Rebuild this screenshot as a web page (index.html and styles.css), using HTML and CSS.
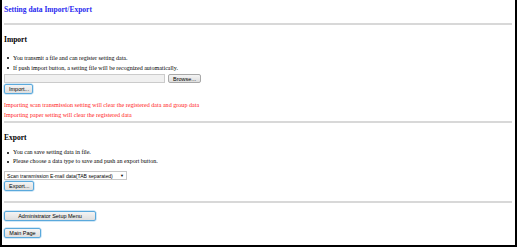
FILE: index.html
```html
<!DOCTYPE html>
<html lang="en">
<head>
    <meta charset="UTF-8">
    <title>Setting data Import/Export</title>
    <link rel="stylesheet" href="styles.css">
</head>
<body>

<div class="frame">
    <h1 class="page-title">Setting data Import/Export</h1>
    <hr class="rule">

    <!-- Import -->
    <div class="block import-block">
        <h2 class="block-title">Import</h2>
        <ul class="notes">
            <li>You transmit a file and can register setting data.</li>
            <li>If push import button, a setting file will be recognized automatically.</li>
        </ul>
        <div class="file-row">
            <div class="file-path"></div>
            <button class="btn btn-plain browse-btn">Browse...</button>
        </div>
        <button class="btn import-btn">Import...</button>
        <p class="warning">Importing scan transmission setting will clear the registered data and group data<br>Importing paper setting will clear the registered data</p>
    </div>
    <hr class="rule rule-tight">

    <!-- Export -->
    <div class="block export-block">
        <h2 class="block-title">Export</h2>
        <ul class="notes">
            <li>You can save setting data in file.</li>
            <li>Please choose a data type to save and push an export button.</li>
        </ul>
        <div class="select-box">
            <span>Scan transmission E-mail data(TAB separated)</span>
            <span class="arrow">&#9660;</span>
        </div>
        <button class="btn export-btn">Export...</button>
    </div>
    <hr class="rule rule-wide">

    <div class="nav">
        <button class="btn admin-btn">Administrator Setup Menu</button>
        <button class="btn main-btn">Main Page</button>
    </div>
</div>

</body>
</html>
```

FILE: styles.css
```css
body {
    margin: 0;
    background: #fff;
    font-family: 'Liberation Serif', 'Times New Roman', serif;
}
.frame {
    box-sizing: border-box;
    width: 517px;
    height: 247px;
    border-left: 2px solid #000;
    border-right: 2px solid #000;
    border-bottom: 2px solid #000;
    padding: 5px 3px 0 2px;
}
.page-title {
    margin: 0;
    font-size: 7.5px;
    line-height: 10px;
    color: #2a2af0;
    font-weight: bold;
}
.rule {
    margin: 8px 0 0 0;
    height: 2px;
    border: none;
    background-color: #d8d8d8;
}
.rule-tight {
    margin-top: 1px;
}
.rule-wide {
    margin-top: 10px;
}
.block {
    padding-top: 10px;
}
.block-title {
    margin: 0;
    font-size: 7.5px;
    line-height: 10px;
    font-weight: bold;
    color: #000;
}
.notes {
    list-style: none;
    margin: 8px 0 0 0;
    padding: 0;
    font-size: 6px;
    line-height: 10px;
}
.notes li {
    display: flex;
    align-items: center;
}
.notes li::before {
    content: '';
    width: 2px;
    height: 2px;
    border-radius: 50%;
    background-color: #000;
    margin: 0 4px 0 3px;
}
.export-block .notes {
    margin-top: 5px;
    line-height: 9px;
}
.file-row {
    display: flex;
    align-items: center;
    gap: 3px;
    margin-top: 1px;
}
.file-path {
    width: 159px;
    height: 7px;
    background-color: #f0f0f0;
    border: 1px solid #cbcbcb;
}
.btn {
    display: block;
    box-sizing: border-box;
    height: 10px;
    padding: 0 4px;
    font-family: 'Liberation Sans', Arial, sans-serif;
    font-size: 5.5px;
    line-height: 8px;
    color: #000;
    white-space: nowrap;
    background: linear-gradient(#f4f4f4, #dedede);
    border: 1px solid #5aa9dc;
    border-radius: 2px;
    box-shadow: 0 0 0 0.5px #a6d2f0;
}
.btn-plain {
    border-color: #a8a8a8;
    box-shadow: none;
}
.browse-btn {
    width: 33px;
    height: 9px;
}
.import-btn {
    width: 29px;
    margin-top: 1px;
}
.warning {
    margin: 6px 0 0 0;
    font-size: 6.1px;
    line-height: 10px;
    color: #ff2020;
}
.select-box {
    box-sizing: border-box;
    display: flex;
    justify-content: space-between;
    align-items: center;
    width: 123px;
    height: 9px;
    margin-top: 5px;
    padding: 0 2px;
    font-family: 'Liberation Sans', Arial, sans-serif;
    font-size: 5.1px;
    white-space: nowrap;
    border: 1px solid #c8c8c8;
    background-color: #fff;
}
.select-box .arrow {
    font-size: 4px;
}
.export-btn {
    width: 30px;
    margin-top: 1px;
}
.nav {
    padding-top: 8px;
}
.admin-btn {
    width: 92px;
}
.main-btn {
    width: 37px;
    margin-top: 7px;
}
```
